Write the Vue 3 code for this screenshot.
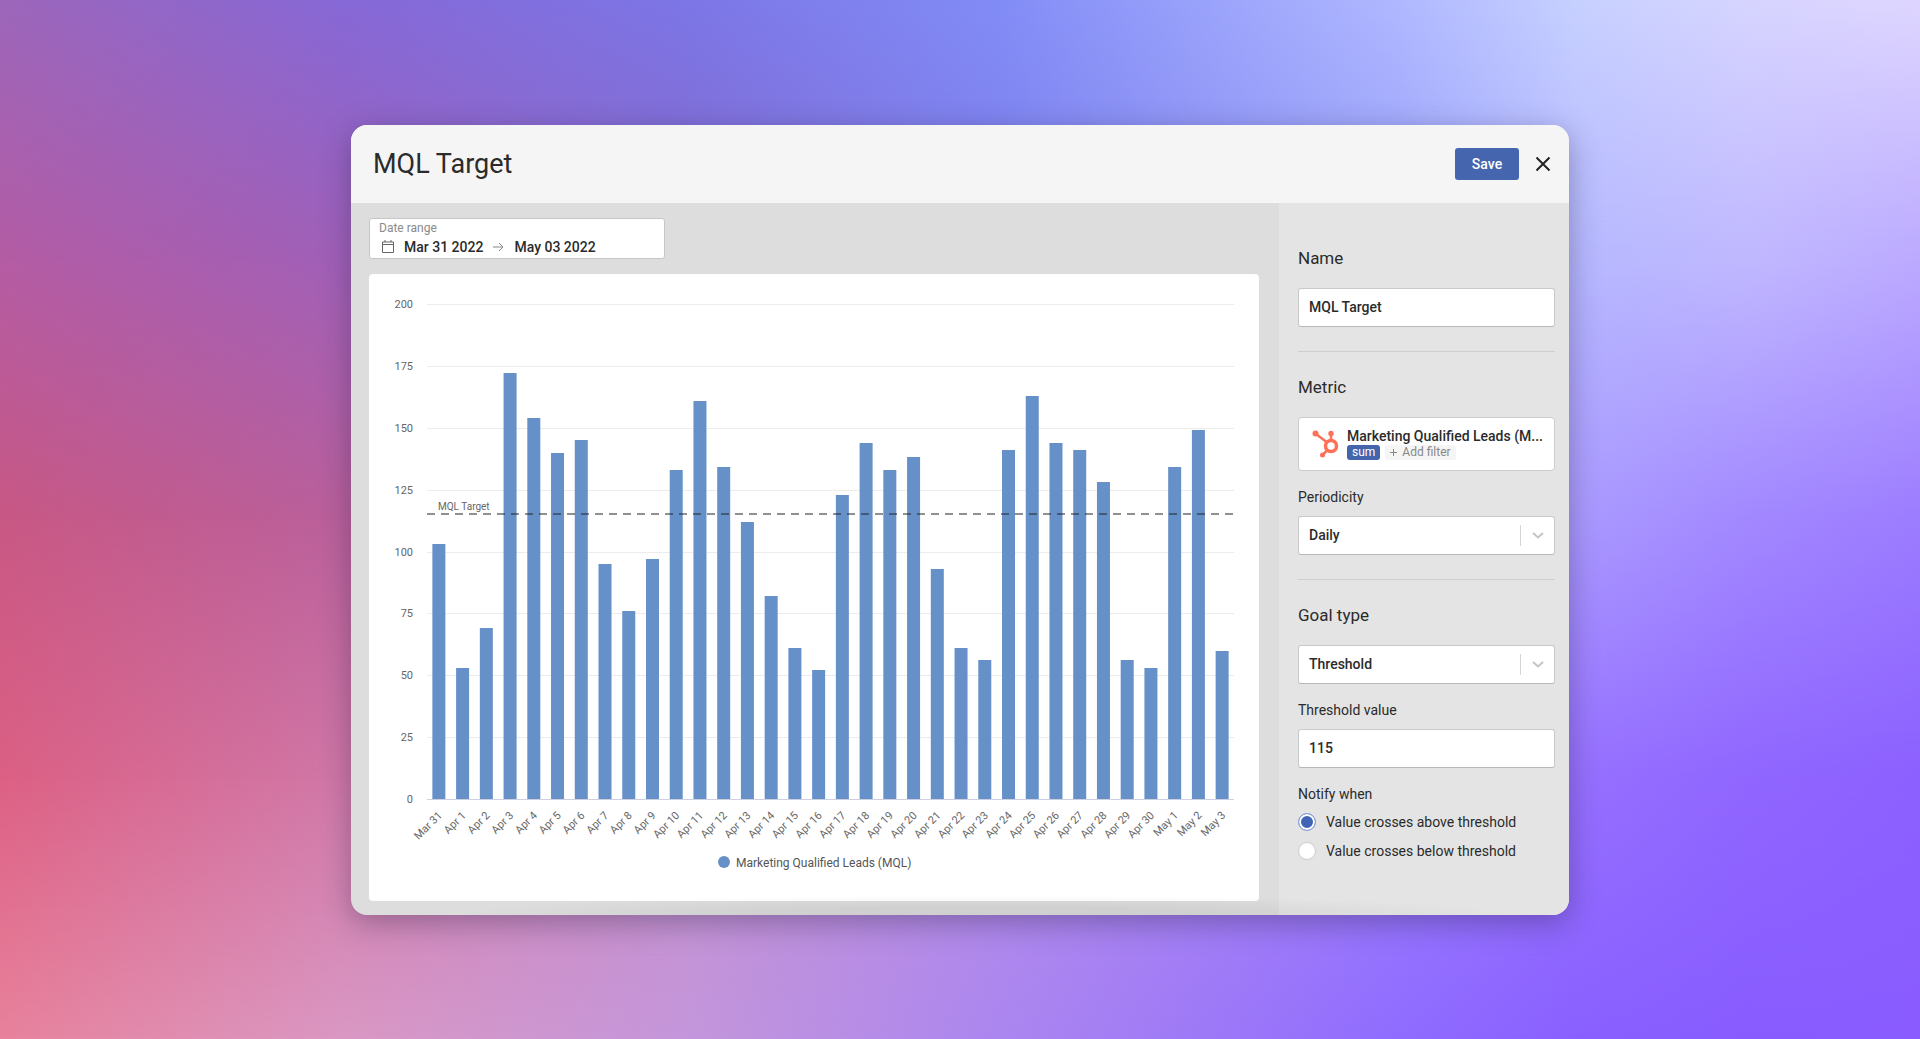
<script setup>
import { ref, computed } from 'vue'

const name = ref('MQL Target')
const periodicity = ref('Daily')
const goalType = ref('Threshold')
const threshold = ref('115')
const notify = ref('above')

const values = [
  103, 53, 69, 172, 154, 140, 145, 95, 76, 97, 133, 161, 134, 112, 82, 61, 52,
  123, 144, 133, 138, 93, 61, 56, 141, 163, 144, 141, 128, 56, 53, 134, 149, 60
]
const ticks = [0, 25, 50, 75, 100, 125, 150, 175, 200]

const plot = { left: 58, right: 865, top: 30, bottom: 525 }
const yOf = (v) => Math.round(plot.bottom - (v / 200) * (plot.bottom - plot.top))
const step = (plot.right - plot.left) / values.length

const dayLabel = (i) => {
  if (i === 0) return 'Mar 31'
  return i <= 30 ? `Apr ${i}` : `May ${i - 30}`
}

const bars = values.map((v, i) => ({
  label: dayLabel(i),
  center: plot.left + step * (i + 0.5),
  y: yOf(v),
  height: plot.bottom - yOf(v)
}))
const targetY = computed(() => yOf(Number(threshold.value) || 0))
</script>

<template>
  <div class="page">
    <div class="backdrop" aria-hidden="true">
      <div class="wash wash-5"></div>
      <div class="wash wash-4"></div>
      <div class="wash wash-3"></div>
      <div class="wash wash-2"></div>
      <div class="wash wash-1"></div>
    </div>

    <main class="modal">
      <header class="header">
        <h1>{{ name }}</h1>
        <div class="actions">
          <button type="button" class="save">Save</button>
          <button type="button" class="close" aria-label="Close">
            <svg width="16" height="16" viewBox="0 0 16 16" fill="none" stroke="#222" stroke-width="2">
              <path d="M1.5 1.5l13 13M14.5 1.5l-13 13" />
            </svg>
          </button>
        </div>
      </header>

      <div class="content">
        <section class="main">
          <button type="button" class="range">
            <span class="range-label">Date range</span>
            <span class="range-row">
              <svg width="12" height="13" viewBox="0 0 12 13" fill="none" stroke="#666">
                <path d="M.5 2h11v10.500H.5zM.5 4.500h11M3 0v2M9 0v2" />
              </svg>
              <span>Mar 31 2022</span>
              <svg width="11" height="10" viewBox="0 0 11 10" fill="none" stroke="#888">
                <path d="M0 5h10M6 1l4 4-4 4" />
              </svg>
              <span>May 03 2022</span>
            </span>
          </button>

          <div class="card">
            <svg class="chart" viewBox="0 0 890 627" role="img" aria-label="Marketing Qualified Leads per day">
              <g v-for="t in ticks" :key="t">
                <line
                  :x1="plot.left" :x2="plot.right" :y1="yOf(t)" :y2="yOf(t)"
                  :class="t === 0 ? 'axis' : 'grid'"
                />
                <text class="tick" x="44" :y="yOf(t) + 4" text-anchor="end">{{ t }}</text>
              </g>
              <g v-for="b in bars" :key="b.label">
                <rect class="bar" :x="b.center - 6.5" :y="b.y" width="13" :height="b.height" />
                <text
                  class="tick" text-anchor="end"
                  :transform="`translate(${b.center + 4} 542) rotate(-45)`"
                >{{ b.label }}</text>
              </g>
              <line class="target" :x1="plot.left" :x2="plot.right" :y1="targetY" :y2="targetY" />
              <text class="target-label" :x="plot.left + 11" :y="targetY - 4">{{ name }}</text>
              <circle class="bar" cx="355" cy="588" r="6" />
              <text class="legend" x="367" y="593">Marketing Qualified Leads (MQL)</text>
            </svg>
          </div>
        </section>

        <aside class="side">
          <div class="group">
            <h2><label for="goal-name">Name</label></h2>
            <input id="goal-name" v-model="name" class="field" type="text" />
          </div>

          <div class="group">
            <h2>Metric</h2>
            <div class="metric">
              <svg class="logo" width="28" height="28" viewBox="0 0 28 28" fill="none" stroke="#ff7059">
                <circle cx="19" cy="16" r="5.500" stroke-width="3.500" />
                <path d="M19 10V4M14.500 12L4 4M15 20.500L10 25.500" stroke-width="2.500" />
                <g fill="#ff7059" stroke="none">
                  <circle cx="19" cy="3.500" r="2.700" />
                  <circle cx="3.500" cy="3.500" r="3" />
                  <circle cx="10.500" cy="25" r="2.500" />
                </g>
              </svg>
              <div class="metric-body">
                <div class="metric-name">Marketing Qualified Leads (M...</div>
                <div class="chips">
                  <button type="button" class="chip chip-sum">sum</button>
                  <button type="button" class="chip chip-add">
                    <svg width="7" height="7" viewBox="0 0 7 7" stroke="#888"><path d="M0 3.500h7M3.500 0v7" /></svg>
                    <span>Add filter</span>
                  </button>
                </div>
              </div>
            </div>
            <label class="label" for="periodicity">Periodicity</label>
            <div class="select">
              <select id="periodicity" v-model="periodicity" class="field">
                <option>Daily</option>
                <option>Weekly</option>
                <option>Monthly</option>
              </select>
              <span class="arrow">
                <svg width="12" height="7" viewBox="0 0 12 7" fill="none" stroke="#c4c4c4" stroke-width="2">
                  <path d="M1 1l5 4.500L11 1" />
                </svg>
              </span>
            </div>
          </div>

          <div class="group">
            <h2><label for="goal-type">Goal type</label></h2>
            <div class="select">
              <select id="goal-type" v-model="goalType" class="field">
                <option>Threshold</option>
                <option>Total</option>
              </select>
              <span class="arrow">
                <svg width="12" height="7" viewBox="0 0 12 7" fill="none" stroke="#c4c4c4" stroke-width="2">
                  <path d="M1 1l5 4.500L11 1" />
                </svg>
              </span>
            </div>
            <label class="label" for="threshold">Threshold value</label>
            <input id="threshold" v-model="threshold" class="field" type="text" />
            <fieldset class="notify">
              <legend>Notify when</legend>
              <label class="option">
                <input v-model="notify" type="radio" name="notify" value="above" />
                <span>Value crosses above threshold</span>
              </label>
              <label class="option">
                <input v-model="notify" type="radio" name="notify" value="below" />
                <span>Value crosses below threshold</span>
              </label>
            </fieldset>
          </div>
        </aside>
      </div>
    </main>
  </div>
</template>

<style>
body {
  margin: 0;
}
</style>

<style scoped>
.page,
.page * {
  box-sizing: border-box;
}

.page {
  position: relative;
  display: flex;
  align-items: center;
  justify-content: center;
  min-height: 100vh;
  padding: 32px;
  font-family: Roboto, "Liberation Sans", sans-serif;
  font-size: 14px;
  line-height: 20px;
  color: #2b2b2b;
}

button,
input,
select {
  margin: 0;
  font: inherit;
  color: inherit;
}

/* Colour mesh: each wash is one row of colours that fades into the row below it. */
.backdrop,
.wash {
  position: absolute;
  inset: 0;
}

.wash-1 {
  background: linear-gradient(90deg, #9c66ba 0%, #8668d6 18%, #7c76e6 36%, #828cf6 52%, #b0b8ff 73%, #c6d0ff 82%, #d6d4ff 91%, #ded6ff 100%);
  mask-image: linear-gradient(180deg, #000 0%, transparent 25%);
}

.wash-2 {
  background: linear-gradient(90deg, #b45ca4 0%, #a060b8 18%, #8468cc 36%, #7c7cec 52%, #98a0fa 73%, #b6b8ff 82%, #c0b8ff 91%, #bcaaff 100%);
  mask-image: linear-gradient(180deg, #000 25%, transparent 50%);
}

.wash-3 {
  background: linear-gradient(90deg, #c85884 0%, #ba609c 18%, #a870c0 36%, #a080e0 52%, #a890fa 73%, #aa9aff 82%, #a288ff 91%, #9c7cff 100%);
  mask-image: linear-gradient(180deg, #000 50%, transparent 75%);
}

.wash-4 {
  background: linear-gradient(90deg, #dc6084 0%, #d078a8 18%, #c490cc 36%, #b48ce8 52%, #9c7cff 73%, #9670ff 82%, #9066ff 91%, #8c60ff 100%);
  mask-image: linear-gradient(180deg, #000 75%, transparent 100%);
}

.wash-5 {
  background: linear-gradient(90deg, #e8829c 0%, #da98c4 18%, #c496dc 36%, #ac86f0 52%, #906cff 73%, #8a60ff 82%, #885cff 91%, #8a5cff 100%);
}

.modal {
  position: relative;
  width: 100%;
  max-width: 1218px;
  overflow: hidden;
  border-radius: 16px;
  background: #ddd;
  box-shadow: 0 8px 30px rgba(40, 30, 60, 0.36);
}

/* Soft shade along the bottom edge of the dialog */
.modal::after {
  content: "";
  position: absolute;
  left: 8%;
  right: 4%;
  bottom: 0;
  height: 20px;
  background: radial-gradient(ellipse 50% 100% at 50% 100%, rgba(0, 0, 0, 0.06) 40%, transparent 100%);
  pointer-events: none;
}

.header {
  display: flex;
  align-items: center;
  justify-content: space-between;
  height: 78px;
  padding: 0 18px 0 22px;
  background: #f5f5f5;
}

h1 {
  margin: 0;
  font-size: 27px;
  font-weight: 400;
  line-height: 32px;
}

.actions {
  display: flex;
  align-items: center;
  gap: 16px;
}

.save {
  width: 64px;
  height: 32px;
  padding: 0;
  border: 0;
  border-radius: 3px;
  background: #4566ae;
  color: #fff;
  font-weight: 500;
}

.close {
  display: flex;
  padding: 0;
  border: 0;
  background: none;
}

.content {
  display: flex;
}

.main {
  flex: 1;
  min-width: 0;
  padding: 15px 20px 14px 18px;
}

.range {
  display: flex;
  flex-direction: column;
  width: 296px;
  height: 41px;
  padding: 0 9px;
  border: 1px solid #c6c6c6;
  border-radius: 3px;
  background: #fff;
  text-align: left;
}

.range-label {
  font-size: 12px;
  line-height: 18px;
  color: #8a8a8a;
}

.range-row {
  display: flex;
  align-items: center;
  gap: 10px;
  padding-left: 3px;
  font-weight: 500;
}

.card {
  margin-top: 15px;
  border-radius: 4px;
  background: #fff;
}

.chart {
  display: block;
  width: 100%;
  height: auto;
}

.grid {
  stroke: #ececec;
  shape-rendering: crispEdges;
}

.axis {
  stroke: #ccd0e0;
  shape-rendering: crispEdges;
}

.bar {
  fill: #6690c8;
}

.tick {
  font-size: 11px;
  fill: #666;
}

.target {
  stroke: #222;
  stroke-opacity: 0.5;
  stroke-width: 2;
  stroke-dasharray: 8 6;
}

.target-label {
  font-size: 10px;
  fill: #666;
}

.legend {
  font-size: 12px;
  fill: #555;
}

.side {
  flex: none;
  width: 290px;
  padding: 20px 14px 0 19px;
  background: #e4e4e4;
}

.group {
  padding: 24px 0;
}

.group + .group {
  border-top: 1px solid #cfcfcf;
}

h2 {
  margin: 0 0 19px;
  font-size: 17px;
  font-weight: 400;
  line-height: 22px;
}

.label {
  display: block;
  margin: 16px 0 9px;
}

.field {
  display: block;
  width: 100%;
  height: 39px;
  padding: 0 10px;
  border: 1px solid #c9c9c9;
  border-bottom-color: #b8b8b8;
  border-radius: 3px;
  background: #fff;
  font-weight: 500;
  appearance: none;
}

.select {
  position: relative;
}

.arrow {
  position: absolute;
  top: 9px;
  right: 1px;
  bottom: 9px;
  display: flex;
  align-items: center;
  justify-content: center;
  width: 34px;
  border-left: 1px solid #d4d4d4;
  pointer-events: none;
}

.metric {
  display: flex;
  align-items: center;
  height: 54px;
  padding: 0 10px 0 13px;
  gap: 7px;
  border: 1px solid #cdcdcd;
  border-radius: 4px;
  background: #fff;
}

.logo {
  flex: none;
}

.metric-body {
  flex: 1;
  min-width: 0;
}

.metric-name {
  font-weight: 500;
  line-height: 18px;
  white-space: nowrap;
}

.chips {
  display: flex;
  gap: 5px;
}

.chip {
  display: flex;
  align-items: center;
  height: 15px;
  padding: 0 5px;
  gap: 5px;
  border: 0;
  border-radius: 3px;
  font-size: 12px;
  line-height: 15px;
}

.chip-sum {
  background: #4464ac;
  color: #fff;
}

.chip-add {
  background: #f5f5f5;
  color: #888;
}

.notify {
  margin: 16px 0 0;
  padding: 0;
  border: 0;
}

.notify legend {
  padding: 0 0 8px;
}

.option {
  display: flex;
  align-items: center;
  gap: 10px;
}

.option + .option {
  margin-top: 9px;
}

.option input {
  width: 18px;
  height: 18px;
  border: 1px solid #ccc;
  border-radius: 50%;
  background: #fff;
  appearance: none;
}

.option input:checked {
  border-color: #8aa4dc;
  background: #4063b4;
  box-shadow: inset 0 0 0 2px #fff;
}
</style>
